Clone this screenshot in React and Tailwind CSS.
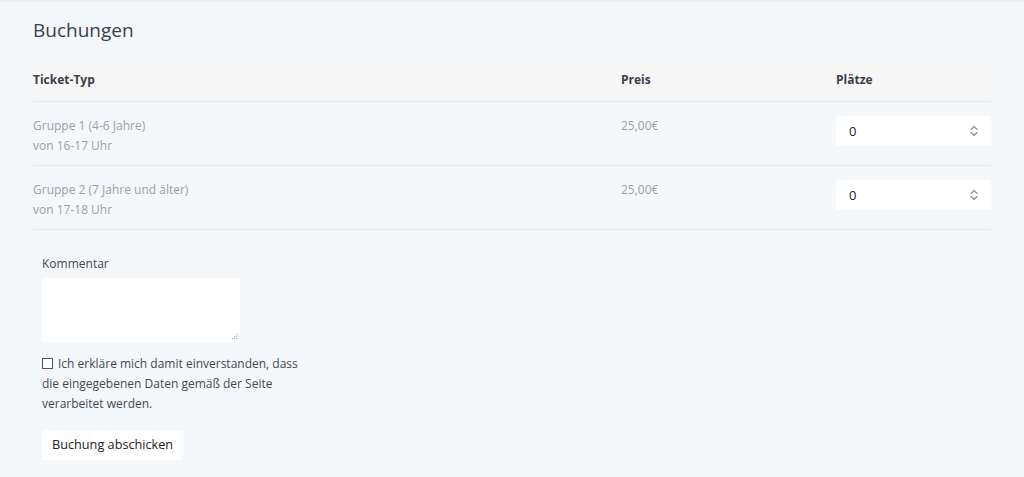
import React from "react";

function Spinner() {
  return (
    <svg width="8" height="12" viewBox="0 0 8 12" fill="none" stroke="#8a8f96" strokeWidth="1.1" strokeLinecap="round" strokeLinejoin="round">
      <path d="M1 4.5 L4 1.5 L7 4.5" />
      <path d="M1 7.5 L4 10.5 L7 7.5" />
    </svg>
  );
}

function NumberBox() {
  return (
    <div className="flex h-[30px] w-[155px] items-center justify-between rounded-[2px] bg-white pl-[13px] pr-[13px] text-[13px] text-[#222]">
      <span>0</span>
      <Spinner />
    </div>
  );
}

const rows = [
  { name: "Gruppe 1 (4-6 Jahre)", time: "von 16-17 Uhr", price: "25,00€" },
  { name: "Gruppe 2 (7 Jahre und älter)", time: "von 17-18 Uhr", price: "25,00€" },
];

export default function App() {
  return (
    <div
      className="min-h-[477px] w-full bg-[#f4f8fb] text-[12px]"
      style={{ fontFamily: '"Open Sans", "Noto Sans", sans-serif' }}
    >
      <div className="h-[2px] bg-gradient-to-b from-[#e9edf0] to-[#f4f8fb]" />
      <div className="px-[33px] pt-[14px]">
        <h2 className="text-[19px] leading-[28px] text-[#3a3f4a]">Buchungen</h2>
        <div className="mt-[13px] w-[958px]">
          <div className="grid h-[45px] grid-cols-[588px_215px_155px] items-center border-b border-[#e6eaed] bg-[#f7f7f7] pt-[2px] font-bold text-[#3a3f4a]">
            <div>Ticket-Typ</div>
            <div>Preis</div>
            <div>Plätze</div>
          </div>
          {rows.map((r, i) => (
            <div
              key={r.name}
              className="grid h-[64px] grid-cols-[588px_215px_155px] items-start border-b border-[#e6eaed] pt-[14px] leading-[20px] text-[#9aa1aa]"
            >
              <div>
                <div>{r.name}</div>
                <div>{r.time}</div>
              </div>
              <div>{r.price}</div>
              <NumberBox />
            </div>
          ))}
        </div>
        <div className="ml-[9px] w-[270px] pt-[24px] text-[#444a52]">
          <div className="leading-[20px]">Kommentar</div>
          <div className="relative mt-[4px] h-[64px] w-[198px] rounded-[2px] bg-white">
            <svg className="absolute bottom-[2px] right-[2px]" width="6" height="6" viewBox="0 0 6 6" fill="#b0b5bb">
              <rect x="4" y="0" width="1.2" height="1.2" />
              <rect x="2" y="2" width="1.2" height="1.2" />
              <rect x="4" y="2" width="1.2" height="1.2" />
              <rect x="0" y="4" width="1.2" height="1.2" />
              <rect x="2" y="4" width="1.2" height="1.2" />
              <rect x="4" y="4" width="1.2" height="1.2" />
            </svg>
          </div>
          <div className="mt-[12px] w-[262px] leading-[20px]">
            <span className="mr-[5px] inline-block h-[11px] w-[11px] border border-[#555] bg-white align-[-1px]" />
            Ich erkläre mich damit einverstanden, dass die eingegebenen Daten gemäß der Seite verarbeitet werden.
          </div>
          <div className="mt-[16px] inline-flex h-[30px] items-center rounded-[2px] bg-white px-[10px] text-[12.7px] text-[#222]">
            Buchung abschicken
          </div>
        </div>
      </div>
    </div>
  );
}
